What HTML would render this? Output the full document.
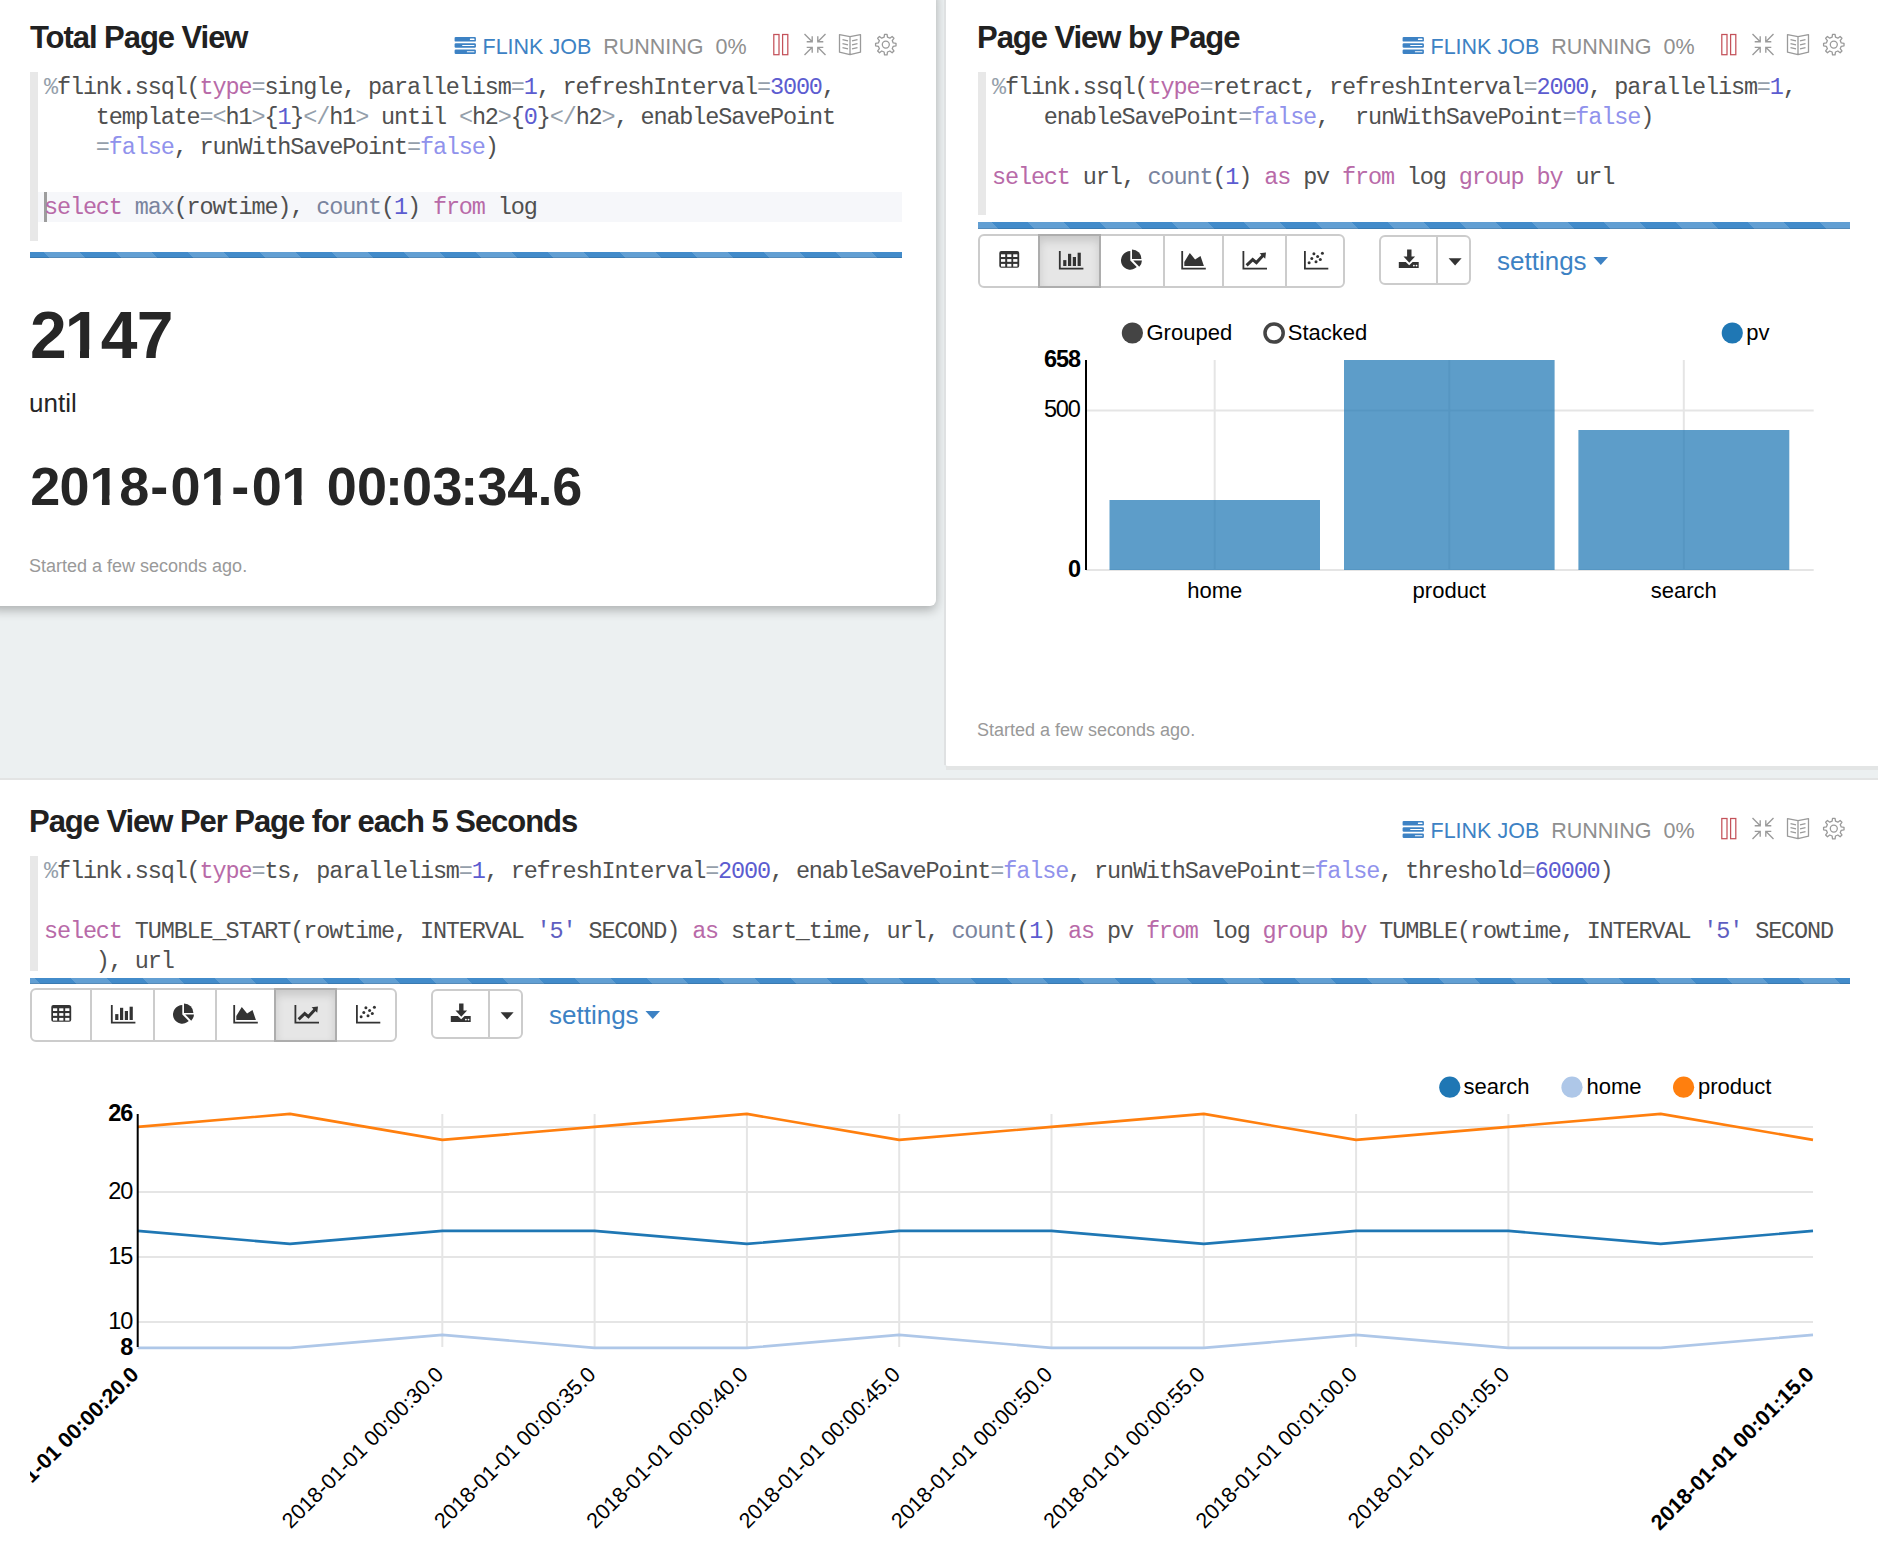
<!DOCTYPE html><html><head><meta charset="utf-8"><style>
html,body{margin:0;padding:0}
body{width:1878px;height:1552px;background:#ecf0f1;position:relative;overflow:hidden;font-family:"Liberation Sans",sans-serif}
.card{position:absolute;background:#fff}
.pbar{position:absolute;height:6px;background-color:#428bca;background-image:linear-gradient(45deg,rgba(255,255,255,.17) 25%,transparent 25%,transparent 50%,rgba(255,255,255,.17) 50%,rgba(255,255,255,.17) 75%,transparent 75%,transparent);background-size:72px 72px;box-shadow:inset 0 -1px 0 rgba(0,0,0,.12)}
.edborder{position:absolute;width:8px;background:#e8e8e8}
svg{position:absolute;left:0;top:0}
.mono{font-family:"Liberation Mono",monospace;font-size:23.5px;letter-spacing:-1.14px;fill:#505050;white-space:pre}
.title{font-family:"Liberation Sans",sans-serif;font-weight:bold;font-size:31px;fill:#212121;letter-spacing:-1.05px}
.tb{font-family:"Liberation Sans",sans-serif;font-size:21.5px}
.ct{font-family:"Liberation Sans",sans-serif;font-size:22px;fill:#000}
.yl{font-size:23.5px;letter-spacing:-1.1px}
.btng{position:absolute;height:50px;border:2px solid #ccc;border-radius:6px;background:#fff;box-sizing:content-box}
</style></head><body>

<div class="card" style="left:-12px;top:-12px;width:948px;height:618px;border-radius:6px;box-shadow:0 4px 11px rgba(0,0,0,.28)"></div>
<div class="card" style="left:944.5px;top:-12px;width:960px;height:778px;border-radius:3px;background:#fff;box-shadow:0 1px 2px rgba(0,0,0,.06)"></div>
<div style="position:absolute;left:944px;top:0;width:1.6px;height:765px;background:#dfe1e2"></div>
<div style="position:absolute;left:946px;top:766px;width:1000px;height:3.5px;background:#e3e5e5"></div>
<div style="position:absolute;left:0;top:777.8px;width:1878px;height:2.2px;background:#e3e4e4"></div>
<div class="card" style="left:-12px;top:780px;width:1910px;height:800px"></div>
<div class="edborder" style="left:30px;top:72px;height:169px"></div>
<div style="position:absolute;left:38px;top:192px;width:864px;height:30px;background:#f6f7fa"></div>
<div style="position:absolute;left:44px;top:192px;width:3px;height:30px;background:#9d9d9d"></div>
<div class="edborder" style="left:978px;top:72px;height:143px"></div>
<div class="edborder" style="left:30px;top:856px;height:115px"></div>
<div class="pbar" style="left:30px;top:252px;width:872px;height:6px;background-position:13px 0"></div>
<div class="pbar" style="left:978px;top:222.3px;width:872px;height:7px;background-position:49px 0"></div>
<div class="pbar" style="left:30px;top:978px;width:1820px;height:6px;background-position:40px 0"></div>
<div class="btng" style="left:978px;top:234px;width:363px;height:50px"></div>
<div style="position:absolute;left:1038px;top:234px;width:63px;height:54px;background:#e6e6e6;box-sizing:border-box;border:2px solid #adadad;box-shadow:inset 0 5px 8px rgba(0,0,0,.13)"></div>
<div style="position:absolute;left:1163px;top:234px;width:2px;height:54px;background:#ccc"></div>
<div style="position:absolute;left:1222px;top:234px;width:2px;height:54px;background:#ccc"></div>
<div style="position:absolute;left:1285px;top:234px;width:2px;height:54px;background:#ccc"></div>
<div class="btng" style="left:30px;top:988px;width:363px;height:50px"></div>
<div style="position:absolute;left:90px;top:988px;width:2px;height:54px;background:#ccc"></div>
<div style="position:absolute;left:153px;top:988px;width:2px;height:54px;background:#ccc"></div>
<div style="position:absolute;left:215px;top:988px;width:2px;height:54px;background:#ccc"></div>
<div style="position:absolute;left:274px;top:988px;width:63px;height:54px;background:#e6e6e6;box-sizing:border-box;border:2px solid #adadad;box-shadow:inset 0 5px 8px rgba(0,0,0,.13)"></div>
<div class="btng" style="left:1379px;top:235px;width:88px;height:46px"></div><div style="position:absolute;left:1436px;top:235px;width:2px;height:50px;background:#ccc"></div>
<div class="btng" style="left:431px;top:989px;width:88px;height:46px"></div><div style="position:absolute;left:488px;top:989px;width:2px;height:50px;background:#ccc"></div>
<svg width="1878" height="1552" viewBox="0 0 1878 1552">
<text x="30" y="48" class="title">Total Page View</text>
<rect x="454.6" y="36.9" width="21.3" height="4.7" rx="1.2" fill="#3d82c4"/>
<rect x="469.9" y="38.5" width="4.6" height="1.5" rx="0.6" fill="#fff"/>
<rect x="454.6" y="43.3" width="21.3" height="4.4" rx="1.2" fill="#3d82c4"/>
<rect x="462.1" y="44.9" width="12.4" height="1.2" rx="0.6" fill="#fff"/>
<rect x="454.6" y="49.6" width="21.3" height="4.3" rx="1.2" fill="#3d82c4"/>
<rect x="466.8" y="51.2" width="7.7" height="1.1" rx="0.6" fill="#fff"/>
<text x="482.5" y="53.7" class="tb" fill="#3d82c4">FLINK JOB</text>
<text x="603.2" y="53.7" class="tb" fill="#8f8f8f">RUNNING</text>
<text x="715.5" y="53.7" class="tb" fill="#8f8f8f">0%</text>
<rect x="773.8" y="34.5" width="5.2" height="20.2" fill="none" stroke="#c4525a" stroke-width="1.25"/>
<rect x="782.6" y="34.5" width="5.2" height="20.2" fill="none" stroke="#c4525a" stroke-width="1.25"/>
<path d="M804.5,34.0L812.2,41.7M812.2,36.2L812.2,41.7L806.7,41.7M804.5,55.0L812.2,47.3M812.2,52.8L812.2,47.3L806.7,47.3M825.5,34.0L817.8,41.7M817.8,36.2L817.8,41.7L823.3,41.7M825.5,55.0L817.8,47.3M817.8,52.8L817.8,47.3L823.3,47.3" fill="none" stroke="#9a9a9a" stroke-width="1.35"/>
<path d="M839.5,34.6L850.0,36.6L860.5,34.6L860.5,52.2L850.0,54.6L839.5,52.2Z M850.0,36.6L850.0,54.6" fill="none" stroke="#9a9a9a" stroke-width="1.3" stroke-linejoin="round"/>
<path d="M842.5,39.6L848.0,40.8M852.0,40.8L857.5,39.6M842.5,43.6L848.0,44.8M852.0,44.8L857.5,43.6M842.5,47.6L848.0,48.8M852.0,48.8L857.5,47.6" fill="none" stroke="#9a9a9a" stroke-width="1.2"/>
<path d="M884.13,37.18L884.53,34.38L887.07,34.38L887.47,37.18L889.87,38.18L892.13,36.47L893.93,38.27L892.22,40.53L893.22,42.93L896.02,43.33L896.02,45.87L893.22,46.27L892.22,48.67L893.93,50.93L892.13,52.73L889.87,51.02L887.47,52.02L887.07,54.82L884.53,54.82L884.13,52.02L881.73,51.02L879.47,52.73L877.67,50.93L879.38,48.67L878.38,46.27L875.58,45.87L875.58,43.33L878.38,42.93L879.38,40.53L877.67,38.27L879.47,36.47L881.73,38.18Z" fill="none" stroke="#9a9a9a" stroke-width="1.3" stroke-linejoin="round"/>
<circle cx="885.8" cy="44.6" r="3.5" fill="none" stroke="#9a9a9a" stroke-width="1.3"/>
<text x="977" y="48" class="title">Page View by Page</text>
<rect x="1402.6" y="36.9" width="21.3" height="4.7" rx="1.2" fill="#3d82c4"/>
<rect x="1417.9" y="38.5" width="4.6" height="1.5" rx="0.6" fill="#fff"/>
<rect x="1402.6" y="43.3" width="21.3" height="4.4" rx="1.2" fill="#3d82c4"/>
<rect x="1410.1" y="44.9" width="12.4" height="1.2" rx="0.6" fill="#fff"/>
<rect x="1402.6" y="49.6" width="21.3" height="4.3" rx="1.2" fill="#3d82c4"/>
<rect x="1414.8" y="51.2" width="7.7" height="1.1" rx="0.6" fill="#fff"/>
<text x="1430.5" y="53.7" class="tb" fill="#3d82c4">FLINK JOB</text>
<text x="1551.2" y="53.7" class="tb" fill="#8f8f8f">RUNNING</text>
<text x="1663.5" y="53.7" class="tb" fill="#8f8f8f">0%</text>
<rect x="1721.8" y="34.5" width="5.2" height="20.2" fill="none" stroke="#c4525a" stroke-width="1.25"/>
<rect x="1730.6" y="34.5" width="5.2" height="20.2" fill="none" stroke="#c4525a" stroke-width="1.25"/>
<path d="M1752.5,34.0L1760.2,41.7M1760.2,36.2L1760.2,41.7L1754.7,41.7M1752.5,55.0L1760.2,47.3M1760.2,52.8L1760.2,47.3L1754.7,47.3M1773.5,34.0L1765.8,41.7M1765.8,36.2L1765.8,41.7L1771.3,41.7M1773.5,55.0L1765.8,47.3M1765.8,52.8L1765.8,47.3L1771.3,47.3" fill="none" stroke="#9a9a9a" stroke-width="1.35"/>
<path d="M1787.5,34.6L1798.0,36.6L1808.5,34.6L1808.5,52.2L1798.0,54.6L1787.5,52.2Z M1798.0,36.6L1798.0,54.6" fill="none" stroke="#9a9a9a" stroke-width="1.3" stroke-linejoin="round"/>
<path d="M1790.5,39.6L1796.0,40.8M1800.0,40.8L1805.5,39.6M1790.5,43.6L1796.0,44.8M1800.0,44.8L1805.5,43.6M1790.5,47.6L1796.0,48.8M1800.0,48.8L1805.5,47.6" fill="none" stroke="#9a9a9a" stroke-width="1.2"/>
<path d="M1832.13,37.18L1832.53,34.38L1835.07,34.38L1835.47,37.18L1837.87,38.18L1840.13,36.47L1841.93,38.27L1840.22,40.53L1841.22,42.93L1844.02,43.33L1844.02,45.87L1841.22,46.27L1840.22,48.67L1841.93,50.93L1840.13,52.73L1837.87,51.02L1835.47,52.02L1835.07,54.82L1832.53,54.82L1832.13,52.02L1829.73,51.02L1827.47,52.73L1825.67,50.93L1827.38,48.67L1826.38,46.27L1823.58,45.87L1823.58,43.33L1826.38,42.93L1827.38,40.53L1825.67,38.27L1827.47,36.47L1829.73,38.18Z" fill="none" stroke="#9a9a9a" stroke-width="1.3" stroke-linejoin="round"/>
<circle cx="1833.8" cy="44.6" r="3.5" fill="none" stroke="#9a9a9a" stroke-width="1.3"/>
<text x="29" y="832" class="title">Page View Per Page for each 5 Seconds</text>
<rect x="1402.6" y="820.9" width="21.3" height="4.7" rx="1.2" fill="#3d82c4"/>
<rect x="1417.9" y="822.5" width="4.6" height="1.5" rx="0.6" fill="#fff"/>
<rect x="1402.6" y="827.3" width="21.3" height="4.4" rx="1.2" fill="#3d82c4"/>
<rect x="1410.1" y="828.9" width="12.4" height="1.2" rx="0.6" fill="#fff"/>
<rect x="1402.6" y="833.6" width="21.3" height="4.3" rx="1.2" fill="#3d82c4"/>
<rect x="1414.8" y="835.2" width="7.7" height="1.1" rx="0.6" fill="#fff"/>
<text x="1430.5" y="837.7" class="tb" fill="#3d82c4">FLINK JOB</text>
<text x="1551.2" y="837.7" class="tb" fill="#8f8f8f">RUNNING</text>
<text x="1663.5" y="837.7" class="tb" fill="#8f8f8f">0%</text>
<rect x="1721.8" y="818.5" width="5.2" height="20.2" fill="none" stroke="#c4525a" stroke-width="1.25"/>
<rect x="1730.6" y="818.5" width="5.2" height="20.2" fill="none" stroke="#c4525a" stroke-width="1.25"/>
<path d="M1752.5,818.0L1760.2,825.7M1760.2,820.2L1760.2,825.7L1754.7,825.7M1752.5,839.0L1760.2,831.3M1760.2,836.8L1760.2,831.3L1754.7,831.3M1773.5,818.0L1765.8,825.7M1765.8,820.2L1765.8,825.7L1771.3,825.7M1773.5,839.0L1765.8,831.3M1765.8,836.8L1765.8,831.3L1771.3,831.3" fill="none" stroke="#9a9a9a" stroke-width="1.35"/>
<path d="M1787.5,818.6L1798.0,820.6L1808.5,818.6L1808.5,836.2L1798.0,838.6L1787.5,836.2Z M1798.0,820.6L1798.0,838.6" fill="none" stroke="#9a9a9a" stroke-width="1.3" stroke-linejoin="round"/>
<path d="M1790.5,823.6L1796.0,824.8M1800.0,824.8L1805.5,823.6M1790.5,827.6L1796.0,828.8M1800.0,828.8L1805.5,827.6M1790.5,831.6L1796.0,832.8M1800.0,832.8L1805.5,831.6" fill="none" stroke="#9a9a9a" stroke-width="1.2"/>
<path d="M1832.13,821.18L1832.53,818.38L1835.07,818.38L1835.47,821.18L1837.87,822.18L1840.13,820.47L1841.93,822.27L1840.22,824.53L1841.22,826.93L1844.02,827.33L1844.02,829.87L1841.22,830.27L1840.22,832.67L1841.93,834.93L1840.13,836.73L1837.87,835.02L1835.47,836.02L1835.07,838.82L1832.53,838.82L1832.13,836.02L1829.73,835.02L1827.47,836.73L1825.67,834.93L1827.38,832.67L1826.38,830.27L1823.58,829.87L1823.58,827.33L1826.38,826.93L1827.38,824.53L1825.67,822.27L1827.47,820.47L1829.73,822.18Z" fill="none" stroke="#9a9a9a" stroke-width="1.3" stroke-linejoin="round"/>
<circle cx="1833.8" cy="828.6" r="3.5" fill="none" stroke="#9a9a9a" stroke-width="1.3"/>
<text x="44" y="93.6" class="mono"><tspan fill="rgb(149,159,171)">%</tspan>flink.ssql(<tspan fill="rgb(184,106,168)">type</tspan><tspan fill="rgb(149,159,171)">=</tspan>single, parallelism<tspan fill="rgb(149,159,171)">=</tspan><tspan fill="rgb(92,92,208)">1</tspan>, refreshInterval<tspan fill="rgb(149,159,171)">=</tspan><tspan fill="rgb(92,92,208)">3000</tspan>,</text>
<text x="44" y="123.6" class="mono">    template<tspan fill="rgb(149,159,171)">=</tspan><tspan fill="rgb(149,159,171)">&lt;</tspan>h1<tspan fill="rgb(149,159,171)">&gt;</tspan>{<tspan fill="rgb(92,92,208)">1</tspan>}<tspan fill="rgb(149,159,171)">&lt;</tspan><tspan fill="rgb(149,159,171)">/</tspan>h1<tspan fill="rgb(149,159,171)">&gt;</tspan> until <tspan fill="rgb(149,159,171)">&lt;</tspan>h2<tspan fill="rgb(149,159,171)">&gt;</tspan>{<tspan fill="rgb(92,92,208)">0</tspan>}<tspan fill="rgb(149,159,171)">&lt;</tspan><tspan fill="rgb(149,159,171)">/</tspan>h2<tspan fill="rgb(149,159,171)">&gt;</tspan>, enableSavePoint</text>
<text x="44" y="153.6" class="mono">    <tspan fill="rgb(149,159,171)">=</tspan><tspan fill="rgb(144,146,236)">false</tspan>, runWithSavePoint<tspan fill="rgb(149,159,171)">=</tspan><tspan fill="rgb(144,146,236)">false</tspan>)</text>
<text x="44" y="213.6" class="mono"><tspan fill="rgb(184,106,168)">select</tspan> <tspan fill="rgb(122,132,158)">max</tspan>(rowtime), <tspan fill="rgb(122,132,158)">count</tspan>(<tspan fill="rgb(92,92,208)">1</tspan>) <tspan fill="rgb(184,106,168)">from</tspan> log</text>
<text x="992" y="93.6" class="mono"><tspan fill="rgb(149,159,171)">%</tspan>flink.ssql(<tspan fill="rgb(184,106,168)">type</tspan><tspan fill="rgb(149,159,171)">=</tspan>retract, refreshInterval<tspan fill="rgb(149,159,171)">=</tspan><tspan fill="rgb(92,92,208)">2000</tspan>, parallelism<tspan fill="rgb(149,159,171)">=</tspan><tspan fill="rgb(92,92,208)">1</tspan>,</text>
<text x="992" y="123.6" class="mono">    enableSavePoint<tspan fill="rgb(149,159,171)">=</tspan><tspan fill="rgb(144,146,236)">false</tspan>,  runWithSavePoint<tspan fill="rgb(149,159,171)">=</tspan><tspan fill="rgb(144,146,236)">false</tspan>)</text>
<text x="992" y="183.6" class="mono"><tspan fill="rgb(184,106,168)">select</tspan> url, <tspan fill="rgb(122,132,158)">count</tspan>(<tspan fill="rgb(92,92,208)">1</tspan>) <tspan fill="rgb(184,106,168)">as</tspan> pv <tspan fill="rgb(184,106,168)">from</tspan> log <tspan fill="rgb(184,106,168)">group</tspan> <tspan fill="rgb(184,106,168)">by</tspan> url</text>
<text x="44" y="877.6" class="mono"><tspan fill="rgb(149,159,171)">%</tspan>flink.ssql(<tspan fill="rgb(184,106,168)">type</tspan><tspan fill="rgb(149,159,171)">=</tspan>ts, parallelism<tspan fill="rgb(149,159,171)">=</tspan><tspan fill="rgb(92,92,208)">1</tspan>, refreshInterval<tspan fill="rgb(149,159,171)">=</tspan><tspan fill="rgb(92,92,208)">2000</tspan>, enableSavePoint<tspan fill="rgb(149,159,171)">=</tspan><tspan fill="rgb(144,146,236)">false</tspan>, runWithSavePoint<tspan fill="rgb(149,159,171)">=</tspan><tspan fill="rgb(144,146,236)">false</tspan>, threshold<tspan fill="rgb(149,159,171)">=</tspan><tspan fill="rgb(92,92,208)">60000</tspan>)</text>
<text x="44" y="937.6" class="mono"><tspan fill="rgb(184,106,168)">select</tspan> TUMBLE_START(rowtime, INTERVAL <tspan fill="rgb(94,94,193)">&#x27;5&#x27;</tspan> SECOND) <tspan fill="rgb(184,106,168)">as</tspan> start_time, url, <tspan fill="rgb(122,132,158)">count</tspan>(<tspan fill="rgb(92,92,208)">1</tspan>) <tspan fill="rgb(184,106,168)">as</tspan> pv <tspan fill="rgb(184,106,168)">from</tspan> log <tspan fill="rgb(184,106,168)">group</tspan> <tspan fill="rgb(184,106,168)">by</tspan> TUMBLE(rowtime, INTERVAL <tspan fill="rgb(94,94,193)">&#x27;5&#x27;</tspan> SECOND</text>
<text x="44" y="967.6" class="mono">    ), url</text>
<text x="29.95 64.7 100.65 136.85" y="358" style="font-weight:bold;font-size:66px;fill:#262626">2147</text>
<text x="30.25 59.5 89.46 119.25 150.2 170.6 200.46 231.3 251.7 281.56 310 326.8 357.1 385.05 401.9 432.55 460.25 477.55 507.15 537.6 552.2" y="505" style="font-size:54px;font-weight:bold;fill:#262626">2018-01-01 00:03:34.6</text>
<rect x="68.30" y="349.5" width="11.70" height="9" fill="#fff"/><rect x="89.00" y="349.5" width="11" height="9" fill="#fff"/>
<rect x="91.26" y="497.4" width="10.70" height="8.5" fill="#fff"/><rect x="109.56" y="495.4" width="9.5" height="10.5" fill="#fff"/>
<rect x="202.26" y="497.4" width="10.70" height="8.5" fill="#fff"/><rect x="220.56" y="495.4" width="9.5" height="10.5" fill="#fff"/>
<rect x="283.36" y="497.4" width="10.70" height="8.5" fill="#fff"/><rect x="301.66" y="495.4" width="9.5" height="10.5" fill="#fff"/>
<text x="29" y="411.8" style="font-size:26px;fill:#262626">until</text>
<text x="29" y="572.2" style="font-size:18px;fill:#999">Started a few seconds ago.</text>
<text x="977" y="735.8" style="font-size:18px;fill:#999">Started a few seconds ago.</text>
<text x="1497" y="270" style="font-size:26px;fill:#3d82c4">settings</text>
<path d="M1593.5,257L1608,257L1600.75,265Z" fill="#3d82c4"/>
<text x="549" y="1024" style="font-size:26px;fill:#3d82c4">settings</text>
<path d="M645.5,1011L660,1011L652.75,1019Z" fill="#3d82c4"/>
<g>
<line x1="1086" y1="410.5" x2="1813.7" y2="410.5" stroke="#e5e5e5" stroke-width="2"/>
<line x1="1086" y1="570" x2="1813.7" y2="570" stroke="#e5e5e5" stroke-width="2"/>
<line x1="1214.7" y1="360" x2="1214.7" y2="570" stroke="#e5e5e5" stroke-width="2"/>
<line x1="1449.3" y1="360" x2="1449.3" y2="570" stroke="#e5e5e5" stroke-width="2"/>
<line x1="1683.8" y1="360" x2="1683.8" y2="570" stroke="#e5e5e5" stroke-width="2"/>
<rect x="1109.5" y="500" width="210.5" height="70" fill="#1f77b4" fill-opacity="0.72"/>
<rect x="1344" y="360" width="210.6" height="210" fill="#1f77b4" fill-opacity="0.72"/>
<rect x="1578.4" y="430" width="210.9" height="140" fill="#1f77b4" fill-opacity="0.72"/>
<line x1="1086" y1="360" x2="1086" y2="570" stroke="#000" stroke-width="2"/>
<text x="1080" y="367" text-anchor="end" class="ct yl" style="font-weight:bold">658</text>
<text x="1079.8" y="417" text-anchor="end" class="ct yl">500</text>
<text x="1080" y="577" text-anchor="end" class="ct yl" style="font-weight:bold">0</text>
<text x="1214.7" y="597.6" text-anchor="middle" class="ct">home</text>
<text x="1449.3" y="597.6" text-anchor="middle" class="ct">product</text>
<text x="1683.8" y="597.6" text-anchor="middle" class="ct">search</text>
<circle cx="1132.4" cy="333" r="10.6" fill="#444"/>
<text x="1146.5" y="339.8" class="ct">Grouped</text>
<circle cx="1274.1" cy="333" r="9.1" fill="none" stroke="#444" stroke-width="3.5"/>
<text x="1287.8" y="339.8" class="ct">Stacked</text>
<circle cx="1732.3" cy="333" r="10.6" fill="#1f77b4"/>
<text x="1746.2" y="339.8" class="ct">pv</text>
</g>
<defs><clipPath id="lc"><rect x="30" y="1050" width="1820" height="520"/></clipPath></defs>
<line x1="137.7" y1="1126.9" x2="1813" y2="1126.9" stroke="#e5e5e5" stroke-width="2"/>
<line x1="137.7" y1="1191.9" x2="1813" y2="1191.9" stroke="#e5e5e5" stroke-width="2"/>
<line x1="137.7" y1="1256.9" x2="1813" y2="1256.9" stroke="#e5e5e5" stroke-width="2"/>
<line x1="137.7" y1="1321.9" x2="1813" y2="1321.9" stroke="#e5e5e5" stroke-width="2"/>
<line x1="442.3" y1="1114" x2="442.3" y2="1347" stroke="#e5e5e5" stroke-width="2"/>
<line x1="594.6" y1="1114" x2="594.6" y2="1347" stroke="#e5e5e5" stroke-width="2"/>
<line x1="746.9" y1="1114" x2="746.9" y2="1347" stroke="#e5e5e5" stroke-width="2"/>
<line x1="899.2" y1="1114" x2="899.2" y2="1347" stroke="#e5e5e5" stroke-width="2"/>
<line x1="1051.5" y1="1114" x2="1051.5" y2="1347" stroke="#e5e5e5" stroke-width="2"/>
<line x1="1203.8" y1="1114" x2="1203.8" y2="1347" stroke="#e5e5e5" stroke-width="2"/>
<line x1="1356.1" y1="1114" x2="1356.1" y2="1347" stroke="#e5e5e5" stroke-width="2"/>
<line x1="1508.4" y1="1114" x2="1508.4" y2="1347" stroke="#e5e5e5" stroke-width="2"/>
<polyline points="137.7,1347.9 290.0,1347.9 442.3,1334.9 594.6,1347.9 746.9,1347.9 899.2,1334.9 1051.5,1347.9 1203.8,1347.9 1356.1,1334.9 1508.4,1347.9 1660.7,1347.9 1813.0,1334.9" fill="none" stroke="#aec7e8" stroke-width="2.6" stroke-linejoin="round"/>
<polyline points="137.7,1230.9 290.0,1243.9 442.3,1230.9 594.6,1230.9 746.9,1243.9 899.2,1230.9 1051.5,1230.9 1203.8,1243.9 1356.1,1230.9 1508.4,1230.9 1660.7,1243.9 1813.0,1230.9" fill="none" stroke="#1f77b4" stroke-width="2.6" stroke-linejoin="round"/>
<polyline points="137.7,1126.9 290.0,1113.9 442.3,1139.9 594.6,1126.9 746.9,1113.9 899.2,1139.9 1051.5,1126.9 1203.8,1113.9 1356.1,1139.9 1508.4,1126.9 1660.7,1113.9 1813.0,1139.9" fill="none" stroke="#ff7f0e" stroke-width="2.6" stroke-linejoin="round"/>
<line x1="137.7" y1="1114" x2="137.7" y2="1347" stroke="#000" stroke-width="2"/>
<text x="132.2" y="1121.3" text-anchor="end" class="ct yl" style="font-weight:bold">26</text>
<text x="132.2" y="1199.3" text-anchor="end" class="ct yl">20</text>
<text x="132.2" y="1264.3" text-anchor="end" class="ct yl">15</text>
<text x="132.2" y="1329.3" text-anchor="end" class="ct yl">10</text>
<text x="132.2" y="1355.3" text-anchor="end" class="ct yl" style="font-weight:bold">8</text>
<g clip-path="url(#lc)">
<text transform="translate(140.0,1375.7) rotate(-45)" text-anchor="end" class="ct" style="font-size:21.5px;font-weight:bold">2018-01-01 00:00:20.0</text>
<text transform="translate(444.6,1375.7) rotate(-45)" text-anchor="end" class="ct" style="font-size:21.5px">2018-01-01 00:00:30.0</text>
<text transform="translate(596.9,1375.7) rotate(-45)" text-anchor="end" class="ct" style="font-size:21.5px">2018-01-01 00:00:35.0</text>
<text transform="translate(749.2,1375.7) rotate(-45)" text-anchor="end" class="ct" style="font-size:21.5px">2018-01-01 00:00:40.0</text>
<text transform="translate(901.5,1375.7) rotate(-45)" text-anchor="end" class="ct" style="font-size:21.5px">2018-01-01 00:00:45.0</text>
<text transform="translate(1053.8,1375.7) rotate(-45)" text-anchor="end" class="ct" style="font-size:21.5px">2018-01-01 00:00:50.0</text>
<text transform="translate(1206.1,1375.7) rotate(-45)" text-anchor="end" class="ct" style="font-size:21.5px">2018-01-01 00:00:55.0</text>
<text transform="translate(1358.4,1375.7) rotate(-45)" text-anchor="end" class="ct" style="font-size:21.5px">2018-01-01 00:01:00.0</text>
<text transform="translate(1510.7,1375.7) rotate(-45)" text-anchor="end" class="ct" style="font-size:21.5px">2018-01-01 00:01:05.0</text>
<text transform="translate(1815.3,1375.7) rotate(-45)" text-anchor="end" class="ct" style="font-size:21.5px;font-weight:bold">2018-01-01 00:01:15.0</text>
</g>
<circle cx="1449.8" cy="1087.2" r="10.6" fill="#1f77b4"/>
<text x="1463.5" y="1093.8" class="ct">search</text>
<circle cx="1572" cy="1087.2" r="10.6" fill="#aec7e8"/>
<text x="1586.5" y="1093.8" class="ct">home</text>
<circle cx="1683.6" cy="1087.2" r="10.6" fill="#ff7f0e"/>
<text x="1698" y="1093.8" class="ct">product</text>
<rect x="999.3" y="251" width="19.9" height="16.8" rx="2" fill="#333"/>
<rect x="1001.0" y="254.3" width="4.2" height="2.7" fill="#fff"/>
<rect x="1001.0" y="259.1" width="4.2" height="2.7" fill="#fff"/>
<rect x="1001.0" y="263.9" width="4.2" height="2.7" fill="#fff"/>
<rect x="1007.2" y="254.3" width="4.2" height="2.7" fill="#fff"/>
<rect x="1007.2" y="259.1" width="4.2" height="2.7" fill="#fff"/>
<rect x="1007.2" y="263.9" width="4.2" height="2.7" fill="#fff"/>
<rect x="1013.2" y="254.3" width="4.2" height="2.7" fill="#fff"/>
<rect x="1013.2" y="259.1" width="4.2" height="2.7" fill="#fff"/>
<rect x="1013.2" y="263.9" width="4.2" height="2.7" fill="#fff"/>
<path d="M1058.9,251h1.8v16.8h22.7v1.7h-24.5Z" fill="#333"/>
<rect x="1063.2" y="260.1" width="3.2" height="5.9" fill="#333"/>
<rect x="1068.0" y="253.8" width="3.2" height="12.2" fill="#333"/>
<rect x="1072.8" y="257.0" width="3.2" height="9.0" fill="#333"/>
<rect x="1077.6" y="252.7" width="3.2" height="13.3" fill="#333"/>
<path d="M1130.30,260.40L1136.76,267.09A9.3,9.3 0 1 1 1130.30,251.10Z" fill="#333"/>
<path d="M1132.00,258.90L1132.00,249.50A9.4,9.4 0 0 1 1141.40,258.90Z" fill="#333"/>
<path d="M1133.20,260.40L1141.90,260.40A8.7,8.7 0 0 1 1139.24,266.66Z" fill="#333"/>
<path d="M1181.3,251h1.8v16.8h22.7v1.7h-24.5Z" fill="#333"/>
<path d="M1184.3,266L1184.3,262L1189.8,252.9L1195.1,259.4L1200.5,256.0L1203.9,266Z" fill="#333"/>
<path d="M1242.5,251h1.8v16.8h22.7v1.7h-24.5Z" fill="#333"/>
<path d="M1246.6,265.4L1252.7,259.6L1256.4,262.6L1263.0,255.4" fill="none" stroke="#333" stroke-width="3" stroke-linejoin="miter"/>
<path d="M1259.6,253.2L1266.0,252.4L1265.2,258.8Z" fill="#333"/>
<path d="M1304,251h1.8v16.8h22.5v1.7h-24.3Z" fill="#333"/>
<circle cx="1309.1" cy="262.8" r="1.5" fill="#333"/>
<circle cx="1311.8" cy="258.5" r="1.5" fill="#333"/>
<circle cx="1313.9" cy="253.8" r="1.5" fill="#333"/>
<circle cx="1316.0" cy="261.7" r="1.5" fill="#333"/>
<circle cx="1317.6" cy="256.4" r="1.5" fill="#333"/>
<circle cx="1320.3" cy="259.6" r="1.5" fill="#333"/>
<circle cx="1322.4" cy="253.2" r="1.5" fill="#333"/>
<rect x="51.3" y="1005" width="19.9" height="16.8" rx="2" fill="#333"/>
<rect x="53.0" y="1008.3" width="4.2" height="2.7" fill="#fff"/>
<rect x="53.0" y="1013.1" width="4.2" height="2.7" fill="#fff"/>
<rect x="53.0" y="1017.9" width="4.2" height="2.7" fill="#fff"/>
<rect x="59.2" y="1008.3" width="4.2" height="2.7" fill="#fff"/>
<rect x="59.2" y="1013.1" width="4.2" height="2.7" fill="#fff"/>
<rect x="59.2" y="1017.9" width="4.2" height="2.7" fill="#fff"/>
<rect x="65.2" y="1008.3" width="4.2" height="2.7" fill="#fff"/>
<rect x="65.2" y="1013.1" width="4.2" height="2.7" fill="#fff"/>
<rect x="65.2" y="1017.9" width="4.2" height="2.7" fill="#fff"/>
<path d="M110.9,1005h1.8v16.8h22.7v1.7h-24.5Z" fill="#333"/>
<rect x="115.2" y="1014.1" width="3.2" height="5.9" fill="#333"/>
<rect x="120.0" y="1007.8" width="3.2" height="12.2" fill="#333"/>
<rect x="124.8" y="1011.0" width="3.2" height="9.0" fill="#333"/>
<rect x="129.6" y="1006.7" width="3.2" height="13.3" fill="#333"/>
<path d="M182.30,1014.40L188.76,1021.09A9.3,9.3 0 1 1 182.30,1005.10Z" fill="#333"/>
<path d="M184.00,1012.90L184.00,1003.50A9.4,9.4 0 0 1 193.40,1012.90Z" fill="#333"/>
<path d="M185.20,1014.40L193.90,1014.40A8.7,8.7 0 0 1 191.24,1020.66Z" fill="#333"/>
<path d="M233.3,1005h1.8v16.8h22.7v1.7h-24.5Z" fill="#333"/>
<path d="M236.3,1020L236.3,1016L241.8,1006.9L247.1,1013.4L252.5,1010.0L255.9,1020Z" fill="#333"/>
<path d="M294.5,1005h1.8v16.8h22.7v1.7h-24.5Z" fill="#333"/>
<path d="M298.6,1019.4L304.7,1013.6L308.4,1016.6L315.0,1009.4" fill="none" stroke="#333" stroke-width="3" stroke-linejoin="miter"/>
<path d="M311.6,1007.2L318.0,1006.4L317.2,1012.8Z" fill="#333"/>
<path d="M356,1005h1.8v16.8h22.5v1.7h-24.3Z" fill="#333"/>
<circle cx="361.1" cy="1016.8" r="1.5" fill="#333"/>
<circle cx="363.8" cy="1012.5" r="1.5" fill="#333"/>
<circle cx="365.9" cy="1007.8" r="1.5" fill="#333"/>
<circle cx="368.0" cy="1015.7" r="1.5" fill="#333"/>
<circle cx="369.6" cy="1010.4" r="1.5" fill="#333"/>
<circle cx="372.3" cy="1013.6" r="1.5" fill="#333"/>
<circle cx="374.4" cy="1007.2" r="1.5" fill="#333"/>
<path d="M1407.1,249.4h4.4v7.2h3.6l-5.8,6.2l-5.8,-6.2h3.6Z" fill="#333"/>
<path d="M1398.8,262h7.0l3.4,3.2l3.4,-3.2h6.1v6h-19.9Z" fill="#333"/>
<circle cx="1413.9" cy="265.6" r="0.9" fill="#fff"/><circle cx="1416.5" cy="265.6" r="0.9" fill="#fff"/>
<path d="M1448.6,258.2h13l-6.5,7.4Z" fill="#333"/>
<path d="M459.1,1003.4h4.4v7.2h3.6l-5.8,6.2l-5.8,-6.2h3.6Z" fill="#333"/>
<path d="M450.8,1016h7.0l3.4,3.2l3.4,-3.2h6.1v6h-19.9Z" fill="#333"/>
<circle cx="465.9" cy="1019.6" r="0.9" fill="#fff"/><circle cx="468.5" cy="1019.6" r="0.9" fill="#fff"/>
<path d="M500.6,1012.2h13l-6.5,7.4Z" fill="#333"/>
</svg>
</body></html>
